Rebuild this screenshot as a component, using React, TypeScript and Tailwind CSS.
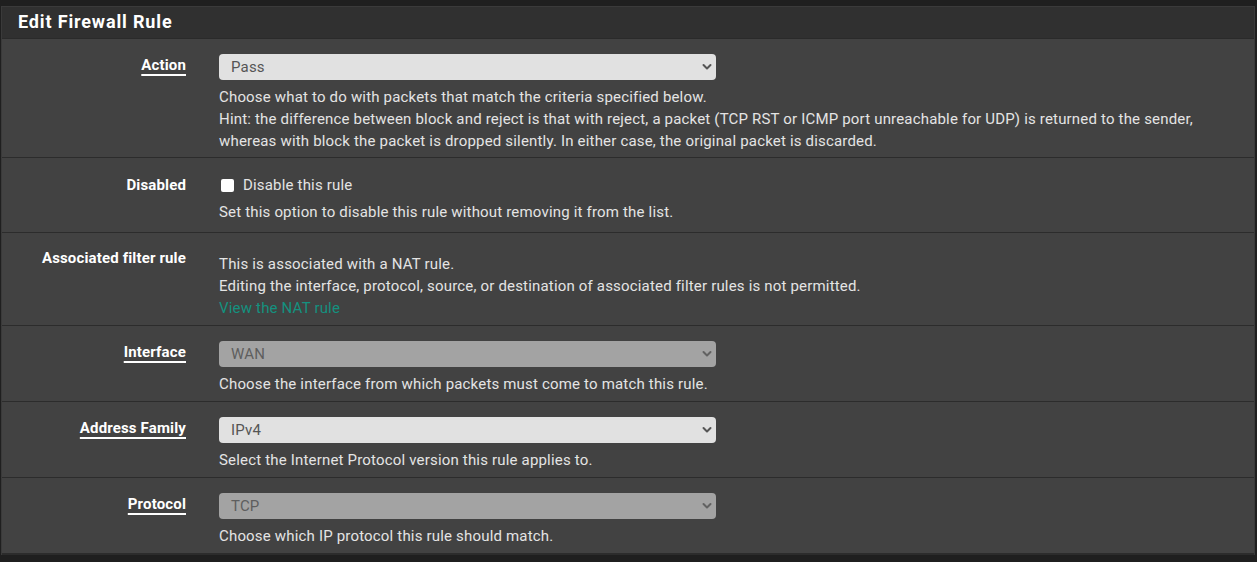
import React from "react";

const Chevron = ({ color }: { color: string }) => (
  <svg width="10" height="7" viewBox="0 0 10 7" className="absolute right-[4px] top-1/2 -translate-y-1/2">
    <path d="M1.5 1.5 L5 5 L8.5 1.5" fill="none" stroke={color} strokeWidth="2" strokeLinecap="round" strokeLinejoin="round" />
  </svg>
);

const Select = ({ value, disabled }: { value: string; disabled?: boolean }) => (
  <div
    className={
      disabled
        ? "relative w-[497px] h-[26px] rounded-[4px] bg-[#a3a3a3] text-[#5e5e5e] text-[15px] leading-[26px] pl-[12px]"
        : "relative w-[497px] h-[26px] rounded-[4px] bg-[#e1e1e1] text-[#555555] text-[15px] leading-[26px] pl-[12px]"
    }
  >
    {value}
    <Chevron color={disabled ? "#626262" : "#555555"} />
  </div>
);

const Label = ({ text, underline }: { text: string; underline?: boolean }) => (
  <span
    className={
      underline
        ? "font-bold text-white tracking-[0.15px] underline decoration-[2px] underline-offset-[4px]"
        : "font-bold text-white tracking-[0.15px]"
    }
  >
    {text}
  </span>
);

export default function App() {
  return (
    <div
      className="w-[1257px] h-[562px] bg-[#1f1f1f] pt-[6px] pl-[1px] overflow-hidden text-[15px] tracking-[0.18px] text-[#e4e4e4]"
      style={{ fontFamily: "Roboto, 'Noto Sans', sans-serif" }}
    >
      <div className="w-[1254px] border border-[#3a3a3a] border-b-0 bg-[#424242]">
        <div className="h-[32px] bg-[#303030] border-b border-[#2a2a2a] pl-[16px] pb-[2px] flex items-center">
          <h2 className="text-[18px] font-bold text-white tracking-[0.85px]">Edit Firewall Rule</h2>
        </div>

        {/* Action */}
        <div className="flex border-b border-[#2c2c2c] pt-[15px] pb-[5px]">
          <div className="w-[184px] text-right leading-[22px]">
            <Label text="Action" underline />
          </div>
          <div className="flex-1 pl-[33px] pr-[30px]">
            <Select value="Pass" />
            <div className="mt-[6px] leading-[22px]">
              Choose what to do with packets that match the criteria specified below.
              <br />
              Hint: the difference between block and reject is that with reject, a packet (TCP RST or ICMP port unreachable for UDP) is returned to the sender, whereas with block the packet is dropped silently. In either case, the original packet is discarded.
            </div>
          </div>
        </div>

        {/* Disabled */}
        <div className="flex border-b border-[#2c2c2c] pt-[16px] pb-[9px]">
          <div className="w-[184px] text-right leading-[22px]">
            <Label text="Disabled" />
          </div>
          <div className="flex-1 pl-[33px] pr-[30px]">
            <div className="flex items-center h-[22px]">
              <span className="inline-block w-[13px] h-[13px] bg-white rounded-[2px] ml-[2px] mr-[9px]" />
              <span>Disable this rule</span>
            </div>
            <div className="mt-[5px] leading-[22px]">
              Set this option to disable this rule without removing it from the list.
            </div>
          </div>
        </div>

        {/* Associated filter rule */}
        <div className="flex border-b border-[#2c2c2c] pt-[14px] pb-[6px]">
          <div className="w-[184px] text-right leading-[22px]">
            <Label text="Associated filter rule" />
          </div>
          <div className="flex-1 pl-[33px] pr-[30px] pt-[6px] leading-[22px]">
            <div>This is associated with a NAT rule.</div>
            <div>Editing the interface, protocol, source, or destination of associated filter rules is not permitted.</div>
            <div className="text-[#14917f]">View the NAT rule</div>
          </div>
        </div>

        {/* Interface */}
        <div className="flex border-b border-[#2c2c2c] pt-[15px] pb-[6px]">
          <div className="w-[184px] text-right leading-[22px]">
            <Label text="Interface" underline />
          </div>
          <div className="flex-1 pl-[33px] pr-[30px]">
            <Select value="WAN" disabled />
            <div className="mt-[6px] leading-[22px]">
              Choose the interface from which packets must come to match this rule.
            </div>
          </div>
        </div>

        {/* Address Family */}
        <div className="flex border-b border-[#2c2c2c] pt-[15px] pb-[6px]">
          <div className="w-[184px] text-right leading-[22px]">
            <Label text="Address Family" underline />
          </div>
          <div className="flex-1 pl-[33px] pr-[30px]">
            <Select value="IPv4" />
            <div className="mt-[6px] leading-[22px]">
              Select the Internet Protocol version this rule applies to.
            </div>
          </div>
        </div>

        {/* Protocol */}
        <div className="flex border-b-2 border-[#2c2c2c] pt-[15px] pb-[6px]">
          <div className="w-[184px] text-right leading-[22px]">
            <Label text="Protocol" underline />
          </div>
          <div className="flex-1 pl-[33px] pr-[30px]">
            <Select value="TCP" disabled />
            <div className="mt-[6px] leading-[22px]">
              Choose which IP protocol this rule should match.
            </div>
          </div>
        </div>
      </div>
    </div>
  );
}
